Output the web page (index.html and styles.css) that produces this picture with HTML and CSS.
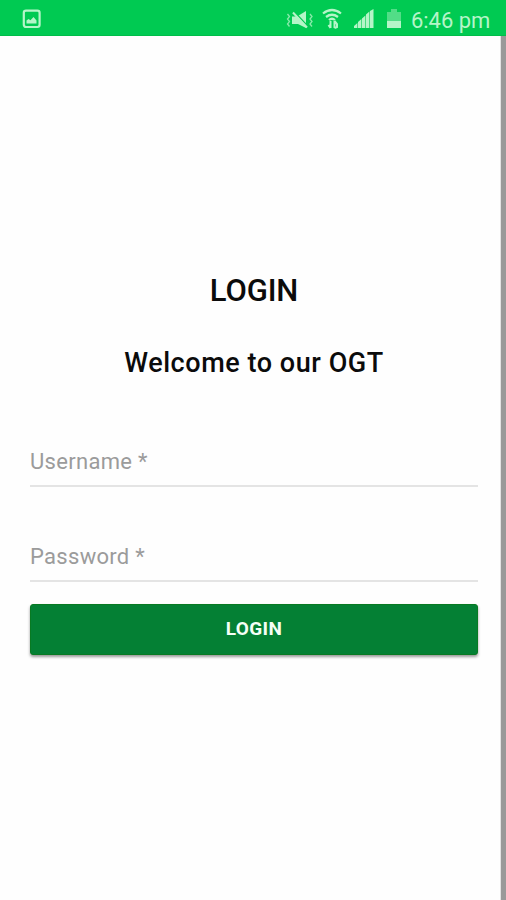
FILE: index.html
```html
<!DOCTYPE html>
<html lang="en">
<head>
<meta charset="utf-8">
<title>Login</title>
<link rel="stylesheet" href="styles.css">
</head>
<body>
<header class="status">
  <svg class="picture" width="20" height="20" viewBox="0 0 20 20"><rect x="1.800" y="1.600" width="15.800" height="16.400" rx="2.200" fill="none" stroke="currentColor" stroke-width="2.200"/><path d="M4.500 14.500V11.500l2-1.500 2 1.200 3-3.200 3 3.500v3z" fill="currentColor"/></svg>
  <svg class="mute" width="28" height="20" viewBox="0 0 28 20"><path d="M6 6.500h5L20 1v17l-8-4H6z" fill="currentColor"/><path d="M9 2.500l13 14" stroke="#00ca52" stroke-width="1.500"/><path d="M7 2.500l14 15" stroke="currentColor" stroke-width="2"/><path d="M1.500 4l2 2.500L1.500 9l2 2.500-2 2.500 2 2.500M24 4l2 2.500L24 9l2 2.500-2 2.500 2 2.500" fill="none" stroke="currentColor" stroke-width="1.300" opacity=".75"/></svg>
  <svg class="wifi" width="20" height="22" viewBox="0 0 20 22"><path d="M1 5.500Q10-1.500 19 5.500M4 9q6-4.500 12 0M7 12q3-2.500 6 0" fill="none" stroke="currentColor" stroke-width="2.200"/><path d="M8.500 13v7M6.500 17L8.500 20M12.500 20v-7M12.500 13l2.500 3v3l-2.500 1" fill="none" stroke="currentColor" stroke-width="2"/></svg>
  <svg class="signal" width="20" height="20" viewBox="0 0 20 20"><path d="M0 19v-2l3.400-3v5zM4 19v-6l3.400-3v9zM8 19V9.500l3.400-3V19zM12 19V5.500l3.400-3V19zM16 19V2l3.500-2v19z" fill="currentColor"/></svg>
  <svg class="battery" width="14" height="20" viewBox="0 0 14 20"><path d="M0 3h4V0h6v3h4v9H0z" fill="currentColor" opacity=".45"/><path d="M0 12h14v7H0z" fill="currentColor"/></svg>
  <span class="time">6:46 pm</span>
</header>
<main class="screen">
  <h1 class="title">LOGIN</h1>
  <h2 class="welcome">Welcome to our OGT</h2>
  <form class="form">
    <label class="field username">Username *</label>
    <label class="field password">Password *</label>
    <button class="submit" type="button">LOGIN</button>
  </form>
</main>
</body>
</html>
```
FILE: styles.css
```css
* { box-sizing: border-box; }
body { margin: 0; height: 900px; overflow: hidden; background: #fefefe; font-family: Roboto, sans-serif; }
.status { display: flex; align-items: flex-start; height: 36px; padding-left: 22px; background: #00ca52; border-bottom: 1px solid #00bd49; color: #b5f5c8; }
.status svg { flex: none; }
.picture { margin-top: 9px; }
.mute { margin: 10px 0 0 244px; }
.wifi { margin: 8px 0 0 8px; }
.signal { margin: 9px 0 0 12px; }
.battery { margin: 9px 0 0 13px; }
.time { margin: 5px 0 0 10px; font-size: 22px; line-height: 31px; white-space: nowrap; letter-spacing: -.05px; }
.screen { height: 864px; padding: 235px 23px 0 30px; border-right: 5px solid #999; box-shadow: inset -1px 0 #e2e2e2; }
.title { margin: 0; font-size: 31px; font-weight: 500; line-height: 40px; text-align: center; color: #0b0b0b; letter-spacing: -.1px; }
.welcome { margin: 32px 0 0; font-size: 27px; font-weight: 500; line-height: 40px; text-align: center; color: #0b0b0b; white-space: nowrap; letter-spacing: .55px; }
.form { padding-top: 61px; }
.field { display: block; height: 43px; border-bottom: 2px solid #e4e4e4; font-size: 22px; line-height: 36px; color: #9b9b9b; letter-spacing: .3px; }
.password { margin-top: 52px; }
.submit { display: block; width: 100%; height: 51px; margin-top: 22px; padding: 0 0 1px; border: 1px solid #087a22; border-radius: 3px; background: #048034; box-shadow: 0 2px 3px rgba(0,0,0,.4); color: #f4fff6; font: 700 19px/48px Roboto, sans-serif; letter-spacing: .4px; }
```
